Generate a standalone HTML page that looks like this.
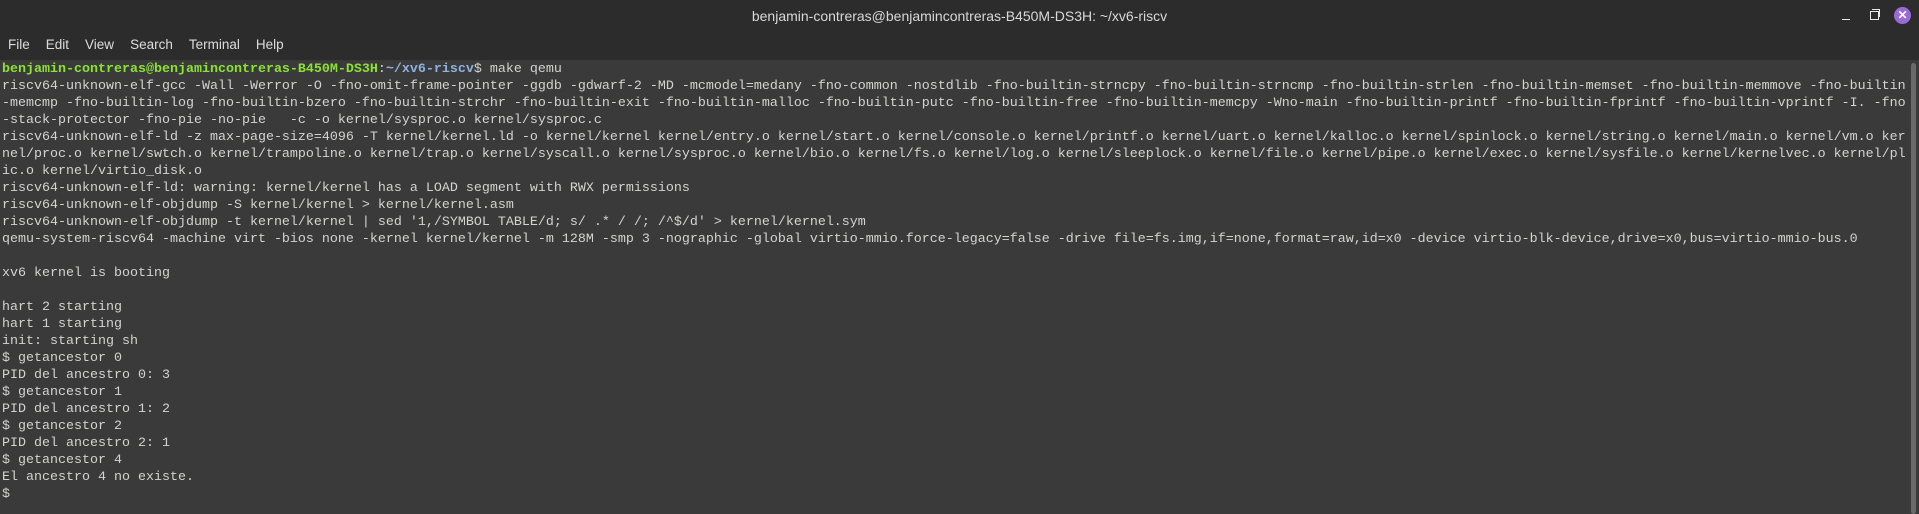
<!DOCTYPE html>
<html><head><meta charset="utf-8"><style>
html,body{margin:0;padding:0;width:1919px;height:514px;overflow:hidden;background:#3a3a3a}
#top{position:absolute;left:0;top:0;width:1919px;height:60px;background:#2c2c2c}
#title{position:absolute;top:8px;left:0;width:1919px;text-align:center;color:#d8d8d8;font:14px "Liberation Sans",sans-serif}
#menu{position:absolute;top:37px;left:8px;color:#dcdcdc;font:13.5px "Liberation Sans",sans-serif}
#menu span{margin-right:16px}
#term{position:absolute;left:2px;top:61px;font:13.333px/17px "Liberation Mono",monospace;color:#d3d3d0;white-space:pre;margin:0}
.g{color:#8ae234;font-weight:bold}.b{color:#8fb3e0;font-weight:bold}
#sb{position:absolute;left:1911px;top:63px;width:5px;height:451px;background:#6a6a6a;border-radius:3px}
.wc{position:absolute;color:#e8e8e8;font:14px "Liberation Sans",sans-serif}
#close{position:absolute;left:1894px;top:7px;width:17px;height:17px;border-radius:50%;background:#9b6ad6;color:#fff;font:bold 12px/17px "Liberation Sans",sans-serif;text-align:center}
</style></head><body>
<div id="top"></div>
<div id="title">benjamin-contreras@benjamincontreras-B450M-DS3H: ~/xv6-riscv</div>
<div class="wc" style="left:1842px;top:8px;width:8px;height:1px;border-top:1px solid #e8e8e8;top:19px"></div>
<div class="wc" style="left:1870px;top:11px;width:7px;height:7px;border:1px solid #e8e8e8"></div>
<div class="wc" style="left:1872px;top:9px;width:7px;height:7px;border-top:1px solid #e8e8e8;border-right:1px solid #e8e8e8"></div>
<div id="close">✕</div>
<div id="menu"><span>File</span><span>Edit</span><span>View</span><span>Search</span><span>Terminal</span><span>Help</span></div>
<pre id="term"><span class="g">benjamin-contreras@benjamincontreras-B450M-DS3H</span>:<span class="b">~/xv6-riscv</span>$ make qemu
riscv64-unknown-elf-gcc -Wall -Werror -O -fno-omit-frame-pointer -ggdb -gdwarf-2 -MD -mcmodel=medany -fno-common -nostdlib -fno-builtin-strncpy -fno-builtin-strncmp -fno-builtin-strlen -fno-builtin-memset -fno-builtin-memmove -fno-builtin
-memcmp -fno-builtin-log -fno-builtin-bzero -fno-builtin-strchr -fno-builtin-exit -fno-builtin-malloc -fno-builtin-putc -fno-builtin-free -fno-builtin-memcpy -Wno-main -fno-builtin-printf -fno-builtin-fprintf -fno-builtin-vprintf -I. -fno
-stack-protector -fno-pie -no-pie   -c -o kernel/sysproc.o kernel/sysproc.c
riscv64-unknown-elf-ld -z max-page-size=4096 -T kernel/kernel.ld -o kernel/kernel kernel/entry.o kernel/start.o kernel/console.o kernel/printf.o kernel/uart.o kernel/kalloc.o kernel/spinlock.o kernel/string.o kernel/main.o kernel/vm.o ker
nel/proc.o kernel/swtch.o kernel/trampoline.o kernel/trap.o kernel/syscall.o kernel/sysproc.o kernel/bio.o kernel/fs.o kernel/log.o kernel/sleeplock.o kernel/file.o kernel/pipe.o kernel/exec.o kernel/sysfile.o kernel/kernelvec.o kernel/pl
ic.o kernel/virtio_disk.o
riscv64-unknown-elf-ld: warning: kernel/kernel has a LOAD segment with RWX permissions
riscv64-unknown-elf-objdump -S kernel/kernel > kernel/kernel.asm
riscv64-unknown-elf-objdump -t kernel/kernel | sed '1,/SYMBOL TABLE/d; s/ .* / /; /^$/d' > kernel/kernel.sym
qemu-system-riscv64 -machine virt -bios none -kernel kernel/kernel -m 128M -smp 3 -nographic -global virtio-mmio.force-legacy=false -drive file=fs.img,if=none,format=raw,id=x0 -device virtio-blk-device,drive=x0,bus=virtio-mmio-bus.0

xv6 kernel is booting

hart 2 starting
hart 1 starting
init: starting sh
$ getancestor 0
PID del ancestro 0: 3
$ getancestor 1
PID del ancestro 1: 2
$ getancestor 2
PID del ancestro 2: 1
$ getancestor 4
El ancestro 4 no existe.
$ </pre>
<div id="sb"></div>
</body></html>
